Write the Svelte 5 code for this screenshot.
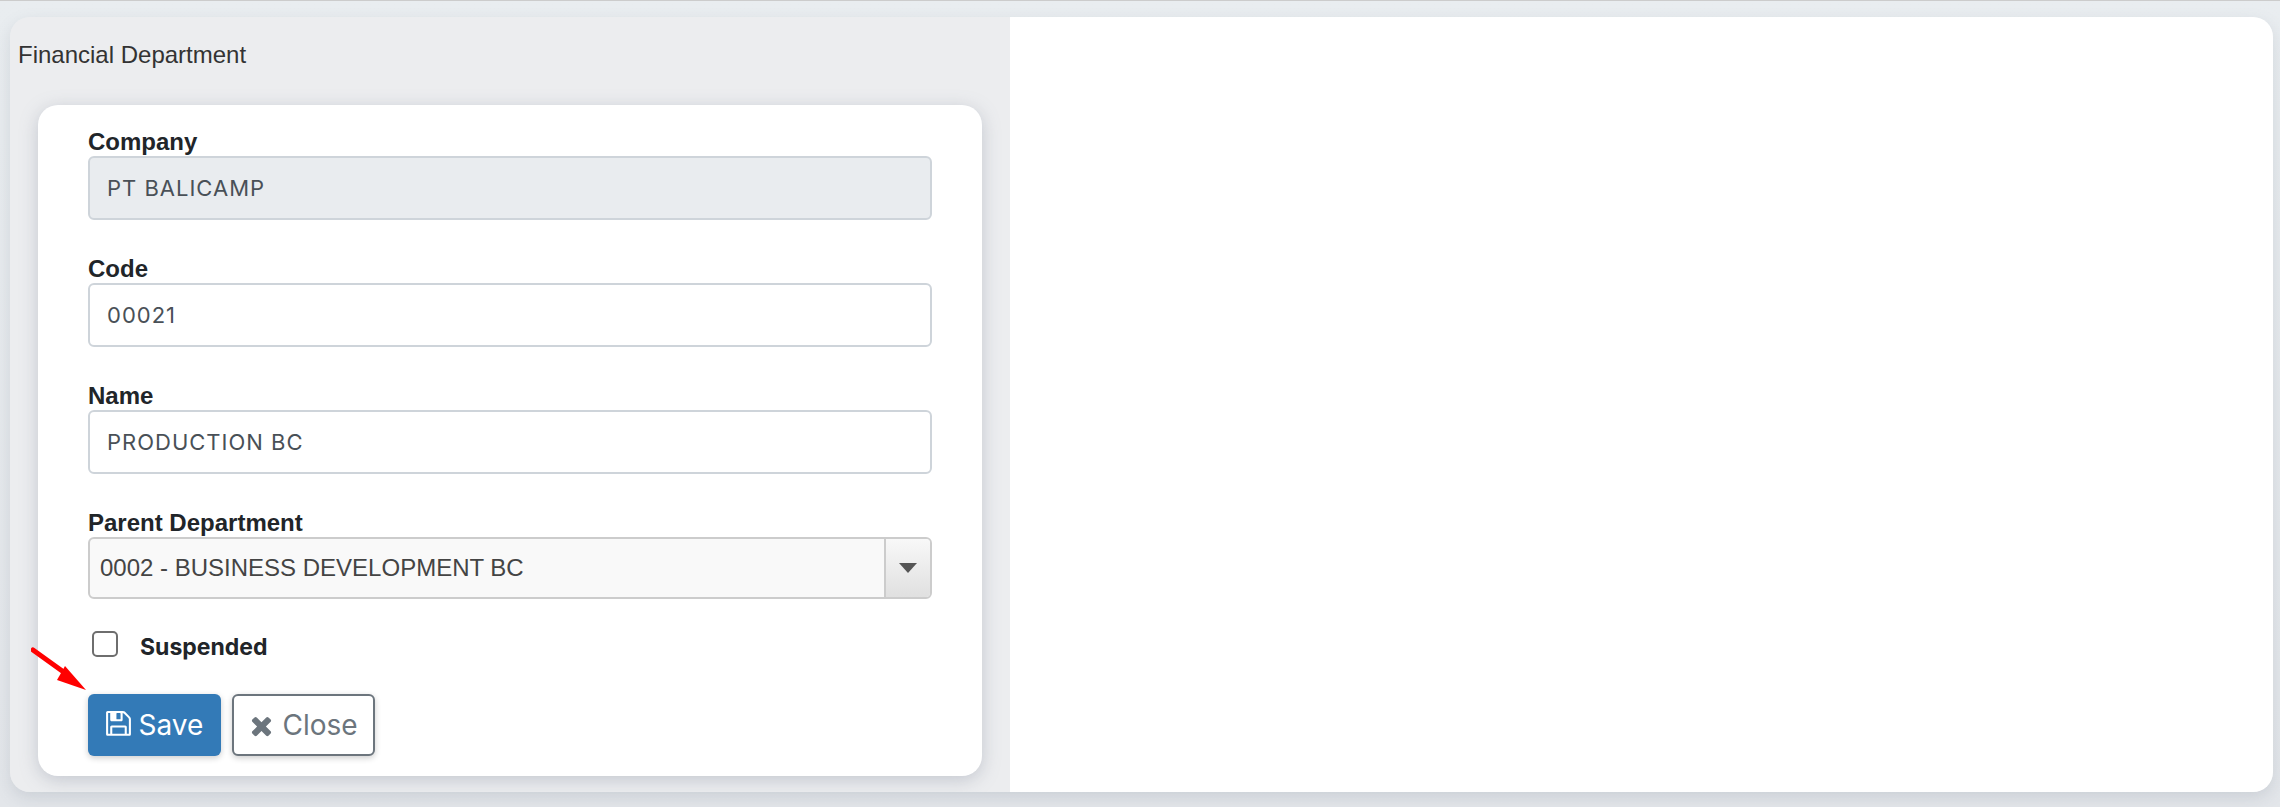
<script lang="ts">
	let code = '00021';
	let name = 'PRODUCTION BC';
	let suspended = false;
</script>

<div class="page">
	<div class="panel">
		<section class="left">
			<h1 class="title">Financial Department</h1>
			<form class="card" on:submit|preventDefault>
				<div class="field">
					<label for="company">Company</label>
					<input id="company" class="input" value="PT BALICAMP" disabled />
				</div>
				<div class="field">
					<label for="code">Code</label>
					<input id="code" class="input" bind:value={code} />
				</div>
				<div class="field">
					<label for="name">Name</label>
					<input id="name" class="input" bind:value={name} />
				</div>
				<div class="field last">
					<label for="parent">Parent Department</label>
					<div id="parent" class="select">
						<span class="select-text">0002 - BUSINESS DEVELOPMENT BC</span>
						<span class="select-btn"><span class="caret"></span></span>
					</div>
				</div>
				<label class="check">
					<input type="checkbox" bind:checked={suspended} />
					<span class="box"></span>
					<span class="check-text">Suspended</span>
				</label>
				<div class="actions">
					<button type="submit" class="btn save">
						<svg class="ico" viewBox="0 0 1536 1792" fill="currentColor"><path d="M384 1408h768v-384h-768v384zm896 0h128v-896q0-14-10-38.5t-20-34.5l-281-281q-10-10-34-20t-39-10v416q0 40-28 68t-68 28h-576q-40 0-68-28t-28-68v-416h-128v1280h128v-416q0-40 28-68t68-28h832q40 0 68 28t28 68v416zm-384-928v-320q0-13-9.5-22.5t-22.5-9.5h-192q-13 0-22.5 9.5t-9.5 22.5v320q0 13 9.5 22.5t22.5 9.5h192q13 0 22.5-9.5t9.5-22.5zm640 32v928q0 40-28 68t-68 28h-1344q-40 0-68-28t-28-68v-1344q0-40 28-68t68-28h928q40 0 88 20t76 48l280 280q28 28 48 76t20 88z"/></svg>
						Save
					</button>
					<button type="button" class="btn close">
						<svg class="ico" viewBox="0 0 1408 1792" fill="currentColor"><path d="M1298 1322q0 40-28 68l-136 136q-28 28-68 28t-68-28l-294-294-294 294q-28 28-68 28t-68-28l-136-136q-28-28-28-68t28-68l294-294-294-294q-28-28-28-68t28-68l136-136q28-28 68-28t68 28l294 294 294-294q28-28 68-28t68 28l136 136q28 28 28 68t-28 68l-294 294 294 294q28 28 28 68z"/></svg>
						Close
					</button>
				</div>
			</form>
		</section>
		<section class="right"></section>
	</div>

	<!-- annotation arrow sits over the card -->
	<svg class="arrow" width="60" height="50" viewBox="0 0 60 50">
		<line x1="2" y1="3" x2="34" y2="26" stroke="#f00" stroke-width="5" stroke-linecap="round" />
		<polygon points="55,43 26,33 34,19" fill="#f00" />
	</svg>
</div>

<style>
	:global(body) {
		margin: 0;
		background: #e9ecef;
	}

	.page {
		position: relative;
		box-sizing: border-box;
		height: 807px;
		padding: 16px 7px 15px 10px;
		border-top: 1px solid #ccc;
		background: linear-gradient(#e9edf0, #e3e6ea);
		overflow: hidden;
		font-family: "Liberation Sans", Arial, sans-serif;
	}

	.panel {
		display: flex;
		height: 775px;
		border-radius: 20px;
		overflow: hidden;
		box-shadow: 0 6px 16px rgba(100, 110, 130, 0.18);
	}

	.left {
		box-sizing: border-box;
		width: 1000px;
		flex-shrink: 0;
		padding: 0 28px 16px;
		background: #ecedef;
		display: flex;
		flex-direction: column;
	}

	.right {
		flex: 1;
		background: #fff;
	}

	.title {
		margin: 22px 0 34px -20px;
		font-size: 24px;
		line-height: 32px;
		font-weight: 400;
		color: #333;
	}

	.card {
		flex: 1;
		box-sizing: border-box;
		padding: 22px 50px 20px;
		background: #fff;
		border-radius: 20px;
		box-shadow: 0 4px 18px rgba(120, 130, 150, 0.35);
	}

	.field {
		margin-bottom: 34px;
	}

	.field.last {
		margin-bottom: 26px;
	}

	.field label {
		display: block;
		font-size: 24px;
		line-height: 29px;
		font-weight: 700;
		color: #212529;
	}

	.input {
		display: block;
		box-sizing: border-box;
		width: 100%;
		height: 64px;
		padding: 0 17px;
		border: 2px solid #ced4da;
		border-radius: 6px;
		background: #fff;
		font-family: Inter, sans-serif;
		font-size: 22px;
		letter-spacing: 1px;
		color: #495057;
		outline: none;
	}

	.input:disabled {
		background: #e9ecef;
		opacity: 1;
	}

	.select {
		display: flex;
		height: 62px;
		box-sizing: border-box;
		border: 2px solid #ccc;
		border-radius: 6px;
		background: #f9f9f9;
		align-items: stretch;
	}

	.select-text {
		flex: 1;
		padding-left: 10px;
		font-size: 24px;
		line-height: 58px;
		color: #444;
	}

	.select-btn {
		width: 44px;
		display: flex;
		align-items: center;
		justify-content: center;
		border-left: 2px solid #ccc;
		background: linear-gradient(#f8f8f8, #e0e0e0);
		border-radius: 0 4px 4px 0;
	}

	.caret {
		border-style: solid;
		border-width: 10px 9.5px 0;
		border-color: #555 transparent transparent;
	}

	.check {
		display: flex;
		align-items: center;
		gap: 22px;
		margin-left: 4px;
		height: 38px;
		font-family: Inter, sans-serif;
		font-size: 23px;
		font-weight: 700;
		color: #212529;
	}

	.check-text {
		margin-top: 5px;
	}

	.check input {
		position: absolute;
		opacity: 0;
		pointer-events: none;
	}

	.box {
		box-sizing: border-box;
		width: 26px;
		height: 26px;
		border: 2px solid #6e6e6e;
		border-radius: 5px;
		background: #fff;
	}

	.actions {
		display: flex;
		gap: 11px;
		margin-top: 31px;
	}

	.btn {
		display: flex;
		align-items: center;
		justify-content: center;
		gap: 8px;
		box-sizing: border-box;
		height: 62px;
		padding: 0;
		border-radius: 6px;
		font-family: Inter, sans-serif;
		font-size: 28px;
		font-weight: 400;
		box-shadow: 0 2px 6px rgba(0, 0, 0, 0.2);
	}

	.save {
		width: 133px;
		border: 0;
		background: #337ab7;
		color: #fff;
	}

	.close {
		width: 143px;
		border: 2px solid #6c757d;
		background: #fff;
		color: #6c757d;
	}

	.ico {
		width: 25px;
		height: 29px;
	}

	.arrow {
		position: absolute;
		left: 31px;
		top: 646px;
	}
</style>
